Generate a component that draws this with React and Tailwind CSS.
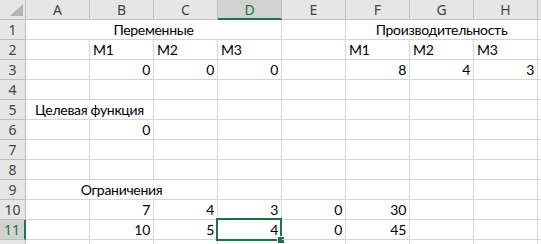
import React from 'react';

const cols = ['A', 'B', 'C', 'D', 'E', 'F', 'G', 'H'];

// каждая строка: список ячеек { t: текст, a: выравнивание, s: объединение }
const rows = [
    [{ t: 'Переменные', a: 'c', s: 4 }, {}, { t: 'Производительность', a: 'c', s: 3 }],
    [{}, { t: 'M1' }, { t: 'M2' }, { t: 'M3' }, {}, { t: 'M1' }, { t: 'M2' }, { t: 'M3' }],
    [{}, { t: '0', a: 'r' }, { t: '0', a: 'r' }, { t: '0', a: 'r' }, {}, { t: '8', a: 'r' }, { t: '4', a: 'r' }, { t: '3', a: 'r' }],
    [{}, {}, {}, {}, {}, {}, {}, {}],
    [{ t: 'Целевая функция', a: 'c', s: 2 }, {}, {}, {}, {}, {}, {}],
    [{}, { t: '0', a: 'r' }, {}, {}, {}, {}, {}, {}],
    [{}, {}, {}, {}, {}, {}, {}, {}],
    [{}, {}, {}, {}, {}, {}, {}, {}],
    [{ t: 'Ограничения', a: 'c', s: 3 }, {}, {}, {}, {}, {}],
    [{}, { t: '7', a: 'r' }, { t: '4', a: 'r' }, { t: '3', a: 'r' }, { t: '0', a: 'r' }, { t: '30', a: 'r' }, {}, {}],
    [{}, { t: '10', a: 'r' }, { t: '5', a: 'r' }, { t: '4', a: 'r', sel: true }, { t: '0', a: 'r' }, { t: '45', a: 'r' }, {}, {}],
];

const spanCls = { 1: '', 2: 'col-span-2', 3: 'col-span-3', 4: 'col-span-4' };
const alignCls = { l: 'justify-start', c: 'justify-center', r: 'justify-end' };

function Cell({ t, a = 'l', s = 1, sel }) {
    return (
        <div className={`relative flex items-end ${alignCls[a]} ${spanCls[s]} px-[3px] pb-[1px] border-r border-b border-[#d4d4d4] text-black whitespace-nowrap`}>
            <span className="leading-[16px]">{t}</span>
            {sel && (
                <div className="absolute -left-[2px] -top-[2px] -right-[1px] -bottom-[2px] border-2 border-[#217346]">
                    <div className="absolute -right-[5px] -bottom-[5px] w-[8px] h-[8px] bg-[#217346] border border-white" />
                </div>
            )}
        </div>
    );
}

export default function App() {
    return (
        <div
            className="w-[541px] h-[244px] overflow-hidden bg-white grid grid-cols-[26px_repeat(8,64px)_1fr] grid-rows-[20px_repeat(11,20px)_1fr] text-[14px] tracking-[-0.3px]"
            style={{ fontFamily: 'Lato, "Open Sans", sans-serif' }}
        >
            {/* угол с треугольником */}
            <div className="relative bg-[#e6e6e6] border-r border-b border-[#bdbdbd]">
                <svg className="absolute left-[10px] top-[4px]" width="13" height="12" viewBox="0 0 13 12">
                    <polygon points="13,0 13,12 0,12" fill="#b4b4b4" />
                </svg>
            </div>

            {/* заголовки столбцов */}
            {cols.map(c => (
                <div
                    key={c}
                    className={`flex items-center justify-center border-r text-[14px] tracking-normal ${
                        c === 'D'
                            ? 'bg-[#d2d2d2] border-b-2 border-b-[#217346] border-r-[#bdbdbd] text-[#217346]'
                            : 'bg-[#e6e6e6] border-b border-[#bdbdbd] text-[#444]'
                    }`}
                    style={{ fontFamily: '"Noto Sans", sans-serif' }}
                >
                    {c}
                </div>
            ))}
            <div className="bg-[#e6e6e6] border-b border-[#bdbdbd]" />

            {/* строки листа */}
            {rows.map((r, i) => (
                <React.Fragment key={i}>
                    <div
                        className={`flex items-center justify-center border-b text-[14px] tracking-normal ${
                            i === 10
                                ? 'bg-[#d2d2d2] border-r-2 border-r-[#217346] border-b-[#bdbdbd] text-[#217346]'
                                : 'bg-[#e6e6e6] border-r border-[#bdbdbd] text-[#444]'
                        }`}
                        style={{ fontFamily: '"Noto Sans", sans-serif' }}
                    >
                        {i + 1}
                    </div>
                    {r.map((cell, j) => <Cell key={j} {...cell} />)}
                    <div className="border-b border-[#d4d4d4]" />
                </React.Fragment>
            ))}

            {/* кусок 12-й строки */}
            <div className="bg-[#e6e6e6] border-r border-[#bdbdbd]" />
            {cols.map(c => <div key={c} className="border-r border-[#d4d4d4]" />)}
            <div />
        </div>
    );
}
